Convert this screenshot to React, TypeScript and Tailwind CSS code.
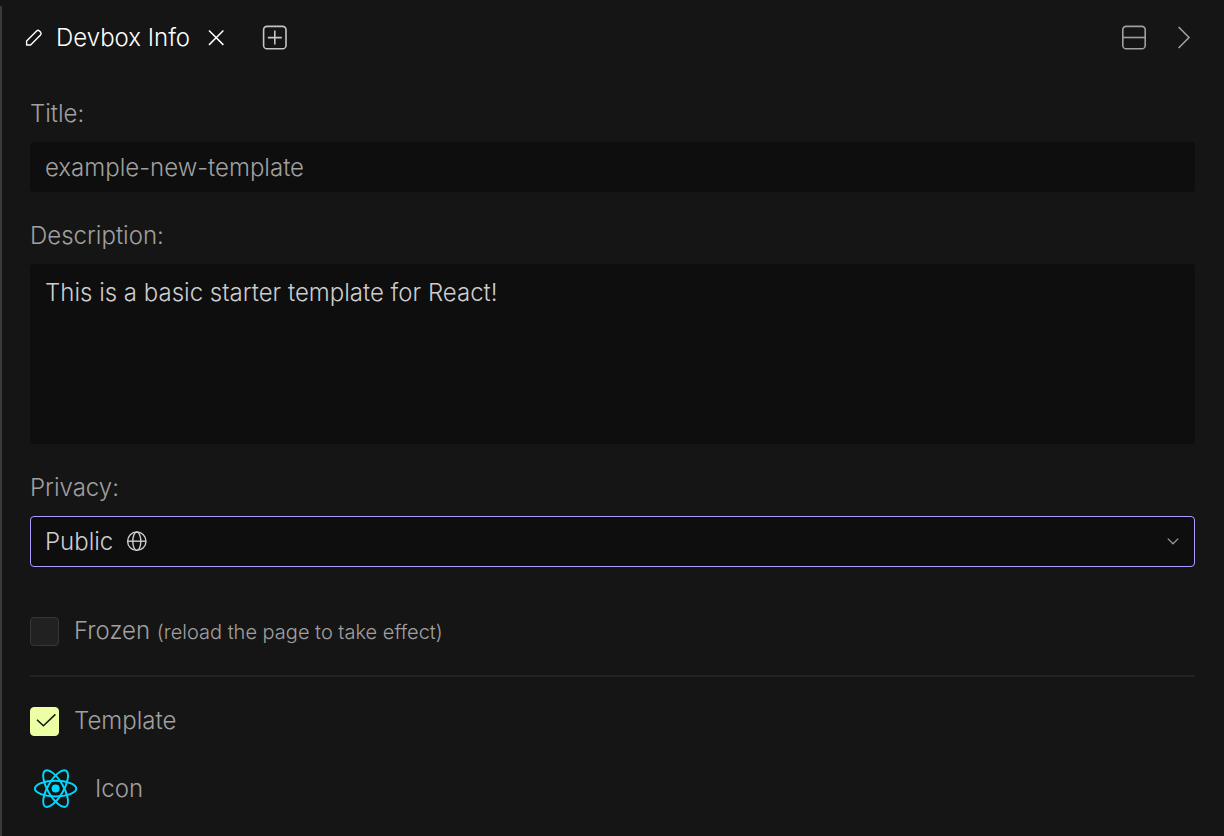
import React, { useState } from 'react';

const CloseIcon = () => (
    <svg className="size-6" viewBox="0 0 24 24" fill="none" stroke="currentColor" strokeWidth="1.5">
        <path d="M5 4.5 19.4 18.9M19.4 4.5 5 18.9" />
    </svg>
);

const PencilIcon = () => (
    <svg className="size-5" viewBox="0 0 20 20" fill="none" stroke="currentColor" strokeWidth="1.4" strokeLinejoin="round">
        <path d="M2.6 17V13L12.6 3a2 2 0 0 1 2.8 0l1.1 1.1a2 2 0 0 1 0 2.8L6.6 17H2.6Z" />
    </svg>
);

const PlusBoxIcon = () => (
    <svg className="size-7" viewBox="0 0 28 28" fill="none" stroke="currentColor" strokeWidth="1.6">
        <rect x="2.6" y="2.4" width="22.4" height="22.4" rx="3.4" />
        <path d="M13.8 6.6v14M6.8 13.6h14" />
    </svg>
);

const SplitIcon = () => (
    <svg className="size-7" viewBox="0 0 28 28" fill="none" stroke="currentColor" strokeWidth="1.6">
        <rect x="2.8" y="2.4" width="22.4" height="22.4" rx="3.4" />
        <path d="M2.8 13.5h22.4" />
    </svg>
);

const ChevronRightIcon = () => (
    <svg className="size-7" viewBox="0 0 28 28" fill="none" stroke="currentColor" strokeWidth="1.6">
        <path d="m8.6 3 10.4 10.5L8.6 24" />
    </svg>
);

const ChevronDownIcon = () => (
    <svg className="size-4" viewBox="0 0 16 16" fill="none" stroke="currentColor" strokeWidth="1.3">
        <path d="m2.8 4.6 5.2 5.2 5.2-5.2" />
    </svg>
);

const GlobeIcon = () => (
    <svg className="size-6" viewBox="0 0 24 24" fill="none" stroke="currentColor" strokeWidth="1.4">
        <circle cx="11.8" cy="11.2" r="9.2" />
        <ellipse cx="11.8" cy="11.2" rx="4" ry="9.2" />
        <path d="M2.6 11.2h18.4" />
    </svg>
);

const ReactIcon = () => (
    <svg className="size-12" viewBox="0 0 48 48" fill="none" stroke="#00d8ff" strokeWidth="1.9">
        <circle cx="23.6" cy="23.6" r="4" fill="#00d8ff" stroke="none" />
        <ellipse cx="23.6" cy="23.6" rx="20.7" ry="7.9" />
        <ellipse cx="23.6" cy="23.6" rx="20.7" ry="7.9" transform="rotate(60 23.6 23.6)" />
        <ellipse cx="23.6" cy="23.6" rx="20.7" ry="7.9" transform="rotate(120 23.6 23.6)" />
    </svg>
);

interface CheckboxProps {
    id: string;
    checked: boolean;
    onChange: (checked: boolean) => void;
    children: React.ReactNode;
}

const Checkbox: React.FC<CheckboxProps> = ({ id, checked, onChange, children }) => (
    <div className="flex items-center gap-[15px]">
        <span className="relative flex">
            <input
                id={id}
                type="checkbox"
                checked={checked}
                onChange={(e) => onChange(e.target.checked)}
                className="size-[29px] appearance-none rounded border border-[#363636] bg-[#212121] checked:border-[#edffa5] checked:bg-[#edffa5]"
            />
            {checked && (
                <svg
                    className="pointer-events-none absolute inset-0 text-[#151515]"
                    viewBox="0 0 29 29"
                    fill="none"
                    stroke="currentColor"
                    strokeWidth="1.5"
                >
                    <path d="m7 12.8 6.4 6L25.4 7.4" />
                </svg>
            )}
        </span>
        <label htmlFor={id}>{children}</label>
    </div>
);

const App: React.FC = () => {
    const [title, setTitle] = useState('example-new-template');
    const [description, setDescription] = useState('This is a basic starter template for React!');
    const [frozen, setFrozen] = useState(false);
    const [template, setTemplate] = useState(true);

    return (
        <div className="flex min-h-screen flex-col bg-[#151515] pt-1.5 font-['Inter',sans-serif] text-2xl font-light text-[#a0a0a0]">
            <div className="flex-1 border-l-2 border-[#3a3a3a]">
                {/* Tab bar */}
                <header className="flex h-16 items-center justify-between pl-[22px] pr-[26px]">
                    <div className="flex items-center">
                        <div className="flex items-center text-white">
                            <PencilIcon />
                            <h1 className="ml-3">Devbox Info</h1>
                            <button type="button" aria-label="Close tab" className="ml-3.5">
                                <CloseIcon />
                            </button>
                        </div>
                        <button type="button" aria-label="New tab" className="ml-[33px] text-[#c5c5c5]">
                            <PlusBoxIcon />
                        </button>
                    </div>
                    <div className="flex items-center gap-[22px]">
                        <button type="button" aria-label="Split view">
                            <SplitIcon />
                        </button>
                        <button type="button" aria-label="Next">
                            <ChevronRightIcon />
                        </button>
                    </div>
                </header>

                <form className="flex flex-col gap-7 pb-5 pl-7 pr-[29px] pt-7">
                    <div className="flex flex-col gap-3">
                        <label htmlFor="title">Title:</label>
                        <input
                            id="title"
                            value={title}
                            onChange={(e) => setTitle(e.target.value)}
                            className="h-[50px] rounded bg-[#0e0e0e] px-[15px] outline-none"
                        />
                    </div>

                    <div className="flex flex-col gap-3">
                        <label htmlFor="description">Description:</label>
                        <textarea
                            id="description"
                            value={description}
                            onChange={(e) => setDescription(e.target.value)}
                            className="h-[180px] resize-none rounded bg-[#0e0e0e] px-[15px] py-[13px] text-[#cdcdcd] outline-none"
                        />
                    </div>

                    <div className="flex flex-col gap-3">
                        <label htmlFor="privacy">Privacy:</label>
                        <div className="relative text-[#cdcdcd]">
                            <select
                                id="privacy"
                                className="block h-[51px] w-full appearance-none rounded border border-[#ac9cff] bg-[#0e0e0e] px-3.5 outline-none"
                            >
                                <option>Public</option>
                            </select>
                            <span className="pointer-events-none absolute inset-y-0 left-[95px] flex items-center">
                                <GlobeIcon />
                            </span>
                            <span className="pointer-events-none absolute inset-y-0 right-3.5 flex items-center text-[#999]">
                                <ChevronDownIcon />
                            </span>
                        </div>
                    </div>

                    <div className="mt-5">
                        <Checkbox id="frozen" checked={frozen} onChange={setFrozen}>
                            Frozen <span className="text-xl">(reload the page to take effect)</span>
                        </Checkbox>
                    </div>

                    <hr className="border-t-2 border-[#222]" />

                    <Checkbox id="template" checked={template} onChange={setTemplate}>
                        Template
                    </Checkbox>

                    <button type="button" className="flex items-center gap-[15px] self-start pl-0.5">
                        <ReactIcon />
                        Icon
                    </button>
                </form>
            </div>
        </div>
    );
};

export default App;
